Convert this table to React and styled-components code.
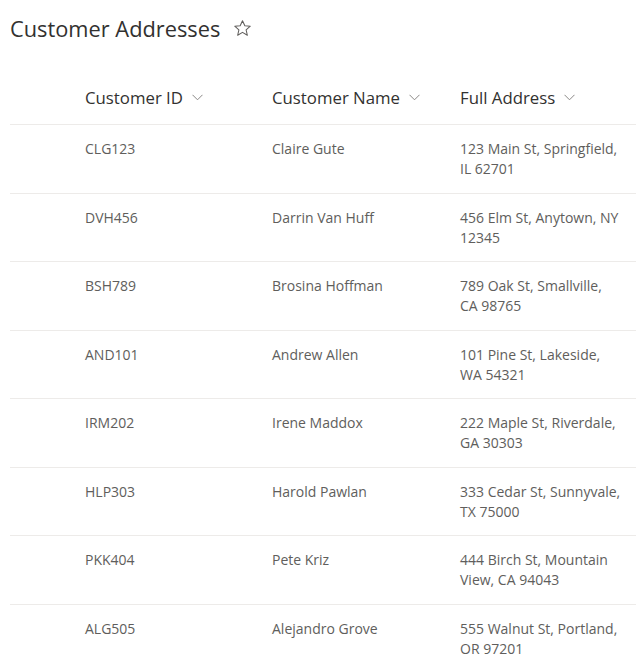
import React from "react";
import styled, { createGlobalStyle } from "styled-components";

const Global = createGlobalStyle`
  html, body { margin: 0; padding: 0; background: #ffffff; }
  body { font-family: "Open Sans", "Noto Sans", sans-serif; -webkit-font-smoothing: antialiased; }
`;

const Page = styled.div`
  width: 636px;
  padding-left: 10px;
  box-sizing: border-box;
  overflow: hidden;
`;

const TitleBar = styled.div`
  display: flex;
  align-items: center;
  gap: 13px;
  height: 56px;
`;

const Title = styled.h1`
  margin: 0;
  font-size: 21.8px;
  font-weight: 400;
  color: #323130;
`;

const StarButton = styled.span`
  display: inline-flex;
  color: #605e5c;
`;

const Grid = styled.div`
  display: grid;
  grid-template-columns: 75px 187px 188px 1fr;
`;

const HeaderCell = styled.div`
  height: 69px;
  display: flex;
  align-items: center;
  gap: 9px;
  font-size: 16.8px;
  font-weight: 400;
  color: #323130;
  border-bottom: 1px solid #edebe9;
  box-sizing: border-box;
  padding-top: 14px;
`;

const Cell = styled.div`
  height: 68.57px;
  box-sizing: border-box;
  padding: 14px 14px 0 0;
  font-size: 14px;
  line-height: 20px;
  color: #605e5c;
  border-bottom: ${(p) => (p.$last ? "none" : "1px solid #edebe9")};
`;

const Chevron = () => (
  <svg width="11" height="7" viewBox="0 0 11 7" fill="none">
    <path d="M0.5 0.8 L5.5 5.8 L10.5 0.8" stroke="#8a8886" strokeWidth="1" />
  </svg>
);

const Star = () => (
  <svg width="19" height="19" viewBox="0 0 20 20" fill="none">
    <path
      d="M10 1.8 L12.45 7.1 L18.2 7.6 L13.8 11.4 L15.1 17.1 L10 14.1 L4.9 17.1 L6.2 11.4 L1.8 7.6 L7.55 7.1 Z"
      stroke="#605e5c"
      strokeWidth="1.1"
      strokeLinejoin="round"
    />
  </svg>
);

const rows = [
  ["CLG123", "Claire Gute", "123 Main St, Springfield, IL 62701"],
  ["DVH456", "Darrin Van Huff", "456 Elm St, Anytown, NY 12345"],
  ["BSH789", "Brosina Hoffman", "789 Oak St, Smallville, CA 98765"],
  ["AND101", "Andrew Allen", "101 Pine St, Lakeside, WA 54321"],
  ["IRM202", "Irene Maddox", "222 Maple St, Riverdale, GA 30303"],
  ["HLP303", "Harold Pawlan", "333 Cedar St, Sunnyvale, TX 75000"],
  ["PKK404", "Pete Kriz", "444 Birch St, Mountain View, CA 94043"],
  ["ALG505", "Alejandro Grove", "555 Walnut St, Portland, OR 97201"],
];

const headers = ["Customer ID", "Customer Name", "Full Address"];

export default function App() {
  return (
    <>
      <Global />
      <Page>
        <TitleBar>
          <Title>Customer Addresses</Title>
          <StarButton>
            <Star />
          </StarButton>
        </TitleBar>
        <Grid>
          <HeaderCell />
          {headers.map((h) => (
            <HeaderCell key={h}>
              {h}
              <Chevron />
            </HeaderCell>
          ))}
          {rows.map((r, i) => (
            <React.Fragment key={r[0]}>
              <Cell $last={i === rows.length - 1} />
              {r.map((c) => (
                <Cell key={c} $last={i === rows.length - 1}>
                  {c}
                </Cell>
              ))}
            </React.Fragment>
          ))}
        </Grid>
      </Page>
    </>
  );
}
